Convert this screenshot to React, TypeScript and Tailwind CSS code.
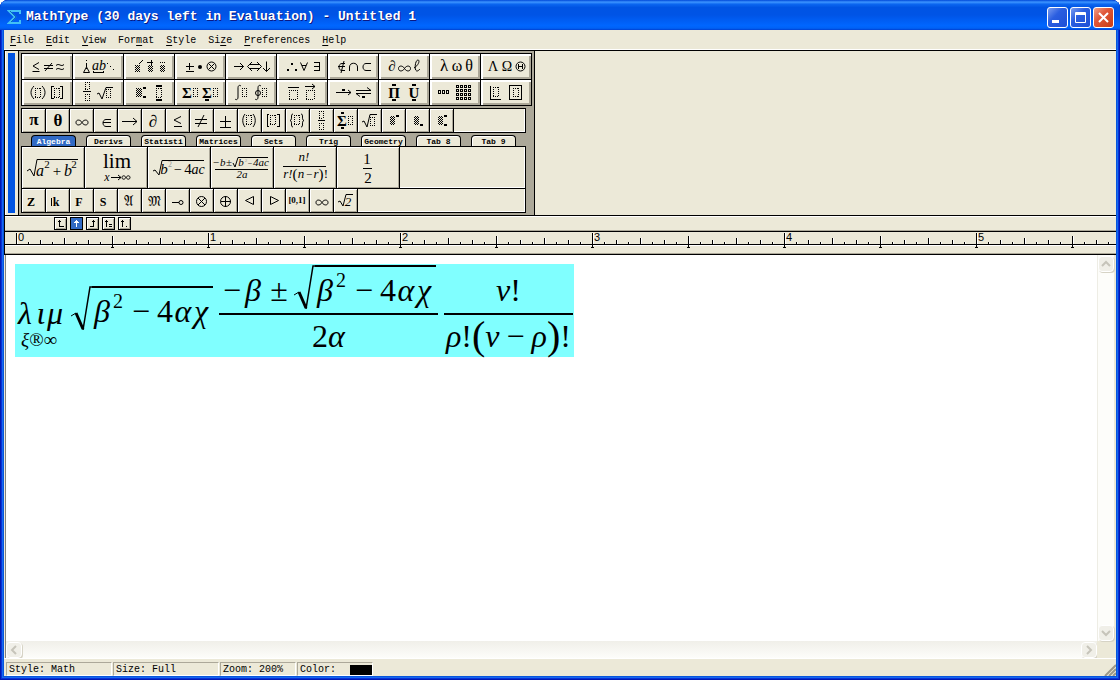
import React from "react";

type IconProps = {
  children: React.ReactNode;
  w: number;
  h: number;
};

type GlyphProps = {
  x: number;
  y: number;
  s?: number;
  b?: boolean;
  i?: boolean;
  fill?: string;
  children: React.ReactNode;
};

type BoxProps = { x: number; y: number; w?: number; h?: number };

const menus = [
  ["", "F", "ile"],
  ["", "E", "dit"],
  ["", "V", "iew"],
  ["For", "m", "at"],
  ["", "S", "tyle"],
  ["Si", "z", "e"],
  ["", "P", "references"],
  ["", "H", "elp"],
];

const tabs = ["Algebra", "Derivs", "Statisti", "Matrices", "Sets", "Trig", "Geometry", "Tab 8", "Tab 9"];

const Icon = ({ children, w, h }: IconProps) => (
  <svg width={w} height={h} viewBox={`0 0 ${w} ${h}`} className="block" aria-hidden="true" fill="none" stroke="none">
    {children}
  </svg>
);

// one symbol, x is its centre and y its baseline
const G = ({ x, y, s = 14, b, i, fill = "#000", children }: GlyphProps) => (
  <text
    x={x}
    y={y}
    fontSize={s}
    textAnchor="middle"
    fill={fill}
    fontFamily="'Liberation Serif', 'DejaVu Serif', 'DejaVu Sans', serif"
    fontWeight={b ? 700 : 400}
    fontStyle={i ? "italic" : "normal"}
  >
    {children}
  </text>
);

const Slot = ({ x, y, w = 5, h = 9 }: BoxProps) => (
  <path
    d={`M${x} ${y}.5h${w}M${x} ${y + h}.5h${w}M${x}.5 ${y}v${h}M${x + w}.5 ${y}v${h + 1}`}
    stroke="#000"
    strokeDasharray="1 1"
    shapeRendering="crispEdges"
  />
);

const Hatch = ({ x, y, w = 5, h = 7 }: BoxProps) => (
  <rect x={x} y={y} width={w} height={h} fill="url(#hatch)" shapeRendering="crispEdges" />
);

const Line = ({ d, t = 1 }: { d: string; t?: number }) => (
  <path d={d} stroke="#000" strokeWidth={t} shapeRendering="crispEdges" />
);

const Curve = ({ d, t = 1 }: { d: string; t?: number }) => <path d={d} stroke="#000" strokeWidth={t} />;

const Bar = ({ x, y, w = 3, h = 2 }: BoxProps) => <rect x={x} y={y} width={w} height={h} fill="#000" />;

const palettes = [
  {
    name: "Relational symbols",
    icon: <><Curve d="M17 8.5l-6 3.5 6 3.5M10.500 17.5h7" /><Curve d="M22 11.5h9M22 14.5h9M30 9l-7 8" /><Curve d="M34 11.5c3-3 5 2 8-1M34 15.5c3-3 5 2 8-1" /></>,
  },
  {
    name: "Spaces and ellipses",
    icon: <><Line d="M13.5 6v1M13.5 9v4M13.5 14v1" /><Curve d="M13.5 13L10.5 18.5h6z" /><G x={26} y={16} s={14} i>ab</G><Line d="M20 16.5v2h10v-2" /><Bar x={34} y={9} w={1} h={1} /><Bar x={37} y={12} w={1} h={1} /><Bar x={40} y={15} w={1} h={1} /></>,
  },
  {
    name: "Embellishments",
    icon: <><Hatch x={11} y={11} /><Curve d="M15 10l4-4" /><Hatch x={24} y={11} /><Line d="M23 8.5h6M27.5 6v5" /><Hatch x={36} y={11} /><Bar x={36} y={8} w={1} h={1} /><Bar x={38} y={8} w={1} h={1} /><Bar x={40} y={8} w={1} h={1} /></>,
  },
  {
    name: "Operator symbols",
    icon: <><Line d="M11 12.5h8M14.5 9v7M11 17.5h8" /><circle cx="25" cy="13" r="2" fill="#000" /><circle cx="36.5" cy="12.5" r="4.5" stroke="#000" /><Curve d="M33.5 9.5l6 6M39.5 9.5l-6 6" /></>,
  },
  {
    name: "Arrow symbols",
    icon: <><Curve d="M8 12.5h9.5M14 9l3.5 3.5L14 16" /><Curve d="M24 10.5h9M24 14.5h9M26 8l-4.5 4.5L26 17M31 8l4.5 4.5L31 17" /><Curve d="M40.5 7.5v10M37 14l3.5 3.5L44 14" /></>,
  },
  {
    name: "Logical symbols",
    icon: <><Bar x={10} y={15} w={2} /><Bar x={14} y={9} w={2} /><Bar x={18} y={15} w={2} /><Curve d="M23.5 8.5l3.5 8 3.5-8M25 11.5h4" /><Line d="M37 8.5h5v8h-5M37 12.5h5" /></>,
  },
  {
    name: "Set theory symbols",
    icon: <><Curve d="M17 9.5h-3c-4 0-4 7 0 7h3M10 12.5h7M16 7l-3 12" /><Curve d="M21.5 17v-4c0-5 8-5 8 0v4" /><Curve d="M43 9.5h-5c-4 0-4 7 0 7h5" /></>,
  },
  {
    name: "Miscellaneous symbols",
    icon: <><G x={13} y={17} s={15}>∂</G><Curve d="M25.5 14.5c-2-3.500-6-3-6 0s4 3.500 6 0 6-3 6 0-4 3.500-6 0" /><Curve d="M35 14c5-3 6-8 4-8-3 0-4 11-1 11 1 0 2-1 3-2" /></>,
  },
  {
    name: "Greek characters (lowercase)",
    icon: <><G x={14} y={17} s={17}>λ</G><G x={27} y={17} s={16}>ω</G><G x={39} y={17} s={16}>θ</G></>,
  },
  {
    name: "Greek characters (uppercase)",
    icon: <><G x={12} y={17} s={14}>Λ</G><G x={26} y={17} s={14}>Ω</G><circle cx="39.5" cy="12.5" r="4.5" stroke="#000" /><Line d="M37.500 10v5M41.500 10v5M37 12.500h5" /></>,
  },
  {
    name: "Fence templates",
    icon: <><Curve d="M12 6c-4 4-4 9 0 13M20 6c4 4 4 9 0 13" /><Slot x={13} y={8} /><Line d="M32 6.5h-2.5v12H32M38 6.5h2.5v12H38" /><Slot x={32} y={8} /></>,
  },
  {
    name: "Fraction and radical templates",
    icon: <><Slot x={12} y={2} w={4} h={7} /><Line d="M10 11.5h8" /><Slot x={12} y={14} w={4} h={6} /><Curve d="M24 14l2-1 3 6 4-11.5h7" /><Slot x={33} y={9} w={4} h={8} /></>,
  },
  {
    name: "Subscript and superscript templates",
    icon: <><Hatch x={12} y={8} w={6} h={9} /><Bar x={19} y={7} /><Bar x={19} y={16} /><Slot x={32} y={8} /><Bar x={32} y={5} w={6} /><Bar x={32} y={19} w={6} /></>,
  },
  {
    name: "Summation templates",
    icon: <><G x={12} y={18} s={15} b>Σ</G><Slot x={18} y={8} w={4} h={8} /><G x={32} y={18} s={15} b>Σ</G><Bar x={30} y={19} w={4} /><Slot x={38} y={8} w={4} h={8} /></>,
  },
  {
    name: "Integral templates",
    icon: <><Curve d="M15 6c-2-1.5-3 0-3 2v9c0 3-2 3-3 2" /><Slot x={16} y={8} w={4} h={8} /><Curve d="M35 6c-2-1.5-3 0-3 2v9c0 3-2 3-3 2" /><circle cx="32" cy="13" r="2.5" stroke="#000" /><Slot x={36} y={8} w={4} h={8} /></>,
  },
  {
    name: "Underbar and overbar templates",
    icon: <><Line d="M11 7.5h11" /><Slot x={12} y={10} w={8} h={9} /><Curve d="M28 6.5h10M35 4l3 2.5-3 2.5" /><Slot x={29} y={10} w={8} h={9} /></>,
  },
  {
    name: "Labeled arrow templates",
    icon: <><Curve d="M8 12.5h15M20 10l3 2.5-3 2.5" /><Bar x={14} y={9} /><Curve d="M28 10.5h15l-4-3M43 13.5H28l4 3" /><Bar x={34} y={16} /></>,
  },
  {
    name: "Products and set theory templates",
    icon: <><G x={15} y={18} s={15} b>Π</G><Bar x={13} y={4} w={4} /><Bar x={13} y={19} w={4} /><G x={35} y={18} s={15} b>U</G><Bar x={33} y={4} w={4} /><Bar x={33} y={19} w={4} /></>,
  },
  {
    name: "Matrix templates",
    icon: (
      <>
        {[8, 12, 16].map((x) => <rect key={x} x={x + 0.5} y="10.5" width="2" height="3" stroke="#000" />)}
        {[0, 1, 2, 3].map((r) => [0, 1, 2, 3].map((c) => (
          <rect key={`${r}-${c}`} x={26.5 + c * 4} y={5.5 + r * 4} width="2" height="2" stroke="#000" />
        )))}
      </>
    ),
  },
  {
    name: "Boxes",
    icon: <><Line d="M9.5 6v13M9 19.5h11" /><Slot x={12} y={7} w={5} h={9} /><Line d="M28.5 5.5h12v14h-12z" /><Slot x={32} y={8} w={5} h={8} /></>,
  },
];

const symbols = [
  { name: "pi", icon: <G x={12} y={16} s={17} b>π</G> },
  { name: "theta", icon: <G x={12} y={17} s={17} b>θ</G> },
  { name: "infinity", icon: <Curve d="M12 13.500c-2-3.500-6-3-6 0s4 3.500 6 0 6-3 6 0-4 3.500-6 0" /> },
  { name: "element of", icon: <Curve d="M17 10.5h-5c-4 0-4 7 0 7h5M9 13.5h8" /> },
  { name: "right arrow", icon: <Curve d="M4 12.5h15M15 9l4 3.5-4 3.5" /> },
  { name: "partial", icon: <G x={11} y={18} s={17} b>∂</G> },
  { name: "less or equal", icon: <Curve d="M15 7.5l-7 3.5 7 3.5M8 17.5h8" /> },
  { name: "not equal", icon: <Curve d="M5 10.5h12M5 14.5h12M14 6L8 18" /> },
  { name: "plus minus", icon: <Line d="M6 12.5h11M11.5 7v11M6 18.5h11" /> },
  { name: "parentheses", icon: <><Curve d="M7 5c-3 4-3 9 0 13M15 5c3 4 3 9 0 13" /><Slot x={8} y={6} /></> },
  { name: "brackets", icon: <><Line d="M7 5.5H5.5v12H7M15 5.5h2.5v12H15" /><Slot x={8} y={6} /></> },
  { name: "braces", icon: <><Curve d="M7 5c-3 0 0 6-3 6.5 3 .5 0 6.5 3 6.5M15 5c3 0 0 6 3 6.5-3 .5 0 6.5-3 6.5" /><Slot x={8} y={6} /></> },
  { name: "fraction", icon: <><Slot x={9} y={2} w={4} h={7} /><Line d="M8 11.5h7" /><Slot x={9} y={14} w={4} h={6} /></> },
  { name: "sum", icon: <><G x={8} y={17} s={15} b>Σ</G><Bar x={7} y={3} /><Bar x={7} y={18} /><Slot x={14} y={7} w={4} h={8} /></> },
  { name: "root", icon: <><Curve d="M4 13l2-1 3 6 3-12.5h7" /><Slot x={12} y={8} w={4} h={8} /></> },
  { name: "superscript", icon: <><Hatch x={8} y={7} w={5} h={9} /><Bar x={14} y={6} /></> },
  { name: "subscript", icon: <><Hatch x={8} y={7} w={5} h={9} /><Bar x={14} y={15} /></> },
  { name: "sub and superscript", icon: <><Hatch x={8} y={7} w={5} h={9} /><Bar x={14} y={6} /><Bar x={14} y={15} /></> },
];

const formulas = [
  {
    name: "root of a squared plus b squared",
    icon: <><Curve d="M5 24l3-2 4 7 3-16.5h41" /><G x={18} y={29} s={16} i>a</G><G x={25} y={21} s={11}>2</G><G x={35} y={29} s={15}>+</G><G x={46} y={29} s={16} i>b</G><G x={52} y={21} s={11}>2</G></>,
  },
  {
    name: "limit",
    icon: <><G x={32} y={21} s={21}>lim</G><G x={22} y={34} s={12} i>x</G><Curve d="M26 30.5h10M33 28l3 2.5-3 2.5" /><Curve d="M41 30.500c-1.500-2.500-4-2-4 0s2.500 2.500 4 0 4-2 4 0-2.500 2.500-4 0" /></>,
  },
  {
    name: "root of discriminant",
    icon: <><Curve d="M5 24l2-1 4 5 3-14.5h42" /><G x={16} y={27} s={15} i>b</G><G x={22} y={20} s={8} fill="#999">2</G><G x={30} y={27}>−</G><G x={40} y={27} s={15}>4</G><G x={50} y={27} s={14} i>ac</G></>,
  },
  {
    name: "quadratic formula",
    icon: <><G x={8} y={19} s={11} i>−b</G><G x={18} y={19} s={11}>±</G><Curve d="M22 16l2 4 3-9.500h30" /><G x={30} y={19} s={11} i>b</G><G x={35} y={15} s={5} fill="#999">2</G><G x={39} y={19} s={8}>−</G><G x={50} y={19} s={11} i>4ac</G><Line d="M4 22.5h53" /><G x={31} y={31} s={11} i>2a</G></>,
  },
  {
    name: "permutations",
    icon: <><G x={30} y={14} s={13} i>n!</G><Line d="M9 19.5h43" /><G x={14} y={31} s={13} i>r!</G><G x={21} y={32} s={15}>(</G><G x={27} y={31} s={13} i>n</G><G x={35} y={31} s={11}>−</G><G x={42} y={31} s={13} i>r</G><G x={47} y={32} s={15}>)</G><G x={52} y={31} s={13}>!</G></>,
  },
  {
    name: "one half",
    icon: <><G x={30} y={17} s={15}>1</G><Line d="M26 21.5h9" /><G x={31} y={36} s={15}>2</G></>,
  },
];

const letters = [
  { name: "integers", icon: <><G x={9} y={17} s={12} b>Z</G><Curve d="M7 16l5-7" /></> },
  { name: "field k", icon: <><G x={10} y={17} s={12} b>k</G><Line d="M5.5 9v8" /></> },
  { name: "field F", icon: <G x={9} y={17} s={12} b>F</G> },
  { name: "sphere", icon: <G x={9} y={17} s={12} b>S</G> },
  { name: "fraktur A", icon: <G x={10} y={17} s={14}>𝔄</G> },
  { name: "fraktur M", icon: <G x={12} y={17} s={14}>𝔐</G> },
  { name: "multimap", icon: <><Curve d="M6 13.5h7" /><circle cx="15" cy="13.5" r="2" stroke="#000" /></> },
  { name: "tensor product", icon: <><circle cx="11.5" cy="12.5" r="5" stroke="#000" /><Curve d="M8 9l7 7M15 9l-7 7" /></> },
  { name: "direct sum", icon: <><circle cx="11.5" cy="12.5" r="5" stroke="#000" /><Line d="M6.5 12.5h10M11.5 7v11" /></> },
  { name: "left triangle", icon: <Curve d="M15.5 7.5v8l-8-4z" /> },
  { name: "right triangle", icon: <Curve d="M8.5 7.5v8l8-4z" /> },
  { name: "unit interval", icon: <G x={11} y={14} s={9} b>[0,1]</G> },
  { name: "infinity sign", icon: <Curve d="M12 13.500c-2-3.500-6-3-6 0s4 3.500 6 0 6-3 6 0-4 3.500-6 0" /> },
  { name: "root two", icon: <><Curve d="M4 13l2-1 3 5 3-11.5h7" /><G x={14} y={17} s={13} i>2</G></> },
];

const tabStops = [
  { name: "Left tab", d: "M3 3.5h3M4.5 2v6h4" },
  { name: "Centre tab", d: "M5.5 2v7M3 4.5h5M4 3.5h3" },
  { name: "Right tab", d: "M5 3.5h3M6.5 2v6h-4" },
  { name: "Relational tab", d: "M2 3.5h3M3.5 2v7M6 6.5h3M6 8.5h3" },
  { name: "Decimal tab", d: "M2 3.5h3M3.5 2v7M7 8.5h1" },
];

const SmallButton = ({ name, children, w, h }: { name: string } & IconProps) => (
  <button
    aria-label={name}
    className="shrink-0 overflow-hidden bg-[#ece9d8] shadow-[inset_1px_1px_#fff,inset_-1px_-1px_#aca899]"
  >
    <Icon w={w} h={h}>{children}</Icon>
  </button>
);

const Rest = () => <div className="flex-1 bg-[#ece9d8] shadow-[inset_-1px_-1px_#fff]" />;

const Ruler = () => {
  const ticks = Array.from({ length: 96 }, (_, n) => n);
  return (
    <svg width="100%" height="22" className="block" shapeRendering="crispEdges" aria-hidden="true">
      <path d="M0 12.5h3000" stroke="#000" />
      <path d="M0 13.5h3000" stroke="#fff" />
      {ticks.map((n) => {
        const x = 11 + n * 12;
        const whole = n % 16 === 0;
        const half = n % 8 === 0;
        const top = whole ? 1 : half ? 4 : n % 4 === 0 ? 6 : n % 2 === 0 ? 8 : 10;
        return (
          <g key={n}>
            <rect x={x} y={top} width="1" height={half && n > 0 ? 15 - top : 12 - top} />
            <rect x={x + 1} y={top} width="1" height={12 - top} fill="#fff" />
            {half && n > 0 && <rect x={x - 1} y="15" width="3" height="1" />}
            {whole && (
              <text x={x + 2} y="9" fontSize="11" fontFamily="'Liberation Sans', sans-serif">
                {n / 16}
              </text>
            )}
          </g>
        );
      })}
    </svg>
  );
};

const ScrollButton = ({ name, d }: { name: string; d: string }) => (
  <button
    aria-label={name}
    className="flex h-4 w-4 shrink-0 items-center justify-center rounded-sm border border-white bg-[#f0efe8] shadow-[1px_1px_#d6d3c5]"
  >
    <svg width="10" height="10" viewBox="0 0 10 10" fill="none" stroke="#c6c4ba" strokeWidth="2">
      <path d={d} />
    </svg>
  </button>
);

const Radical = ({ children }: { children: React.ReactNode }) => (
  <span className="flex">
    <svg width="22" height="46" viewBox="0 0 22 46" fill="none" stroke="#000">
      <path d="M1 30l5-3" />
      <path d="M6 27l7 16" strokeWidth="3" />
      <path d="M13 44L20 1h2" strokeWidth="1.5" />
    </svg>
    <span className="flex border-t-2 border-black pt-[2px] pr-1">{children}</span>
  </span>
);

const Discriminant = () => (
  <Radical>
    <span className="w-5 text-center italic">β</span>
    <sup className="top-0 w-[13px] pl-px text-[20px] leading-[22px]">2</sup>
    <span className="w-8 text-center">−</span>
    <span className="w-4">4</span>
    <span className="w-5 text-center italic">α</span>
    <span className="w-4 text-center italic">χ</span>
  </Radical>
);

const Status = ({ className, children }: { className: string; children: React.ReactNode }) => (
  <div className={`flex h-[14px] items-center border border-t-[#aca899] border-l-[#aca899] border-r-white border-b-white pt-px pl-[2px] ${className}`}>
    {children}
  </div>
);

const App = () => {
  return (
    <div className="flex h-screen min-h-[400px] flex-col overflow-hidden rounded-t-lg bg-[#0855dd] px-1 pb-1 font-['Liberation_Mono',monospace] text-[10px] text-black shadow-[inset_0_0_0_1px_#0019b0,inset_0_0_0_2px_#0831d9,inset_0_0_0_3px_#166aee]">
      <header className="-mx-1 flex h-[30px] shrink-0 items-center bg-[linear-gradient(#0048d8_0%,#3d95ff_7%,#0b66f0_14%,#0054e3_25%,#0054e6_50%,#0066ff_85%,#0062f6_94%,#003fd0_100%)] pt-1 pr-[6px] pl-[7px]">
        <svg width="16" height="16" viewBox="0 0 16 16" fill="none" aria-hidden="true">
          <path d="M13 5V2H2l6 6-6 6h11v-3" stroke="#43c0f5" strokeWidth="2" />
          <path d="M3 2l6 6-5 5" stroke="#0a6fb8" />
        </svg>
        <h1 className="ml-[3px] flex-1 text-[13px] font-bold whitespace-pre text-white [text-shadow:1px_1px_#0a1883]">
          MathType (30 days left in Evaluation) - Untitled 1
        </h1>
        <div className="flex gap-[2px]">
          <button aria-label="Minimize" className="size-[21px] rounded-[3px] border border-white bg-[linear-gradient(135deg,#7a9cf0,#2a5ee0_40%,#1e4fd6)]">
            <svg width="19" height="19"><rect x="4" y="12" width="7" height="3" fill="#fff" /></svg>
          </button>
          <button aria-label="Maximize" className="size-[21px] rounded-[3px] border border-white bg-[linear-gradient(135deg,#7a9cf0,#2a5ee0_40%,#1e4fd6)]">
            <svg width="19" height="19" fill="none" stroke="#fff"><path d="M4.5 4.5h10v10h-10zM4 5.5h11M4 6.5h11" /></svg>
          </button>
          <button aria-label="Close" className="size-[21px] rounded-[3px] border border-white bg-[linear-gradient(135deg,#f0a088,#e0583a_40%,#c83c14)]">
            <svg width="19" height="19" stroke="#fff" strokeWidth="2"><path d="M5 5l9 9M14 5l-9 9" /></svg>
          </button>
        </div>
      </header>

      <nav className="flex h-[21px] shrink-0 items-center gap-3 border-b border-black bg-[#ece9d8] pt-[2px] pl-[6px] shadow-[inset_0_-1px_#fff]">
        {menus.map(([before, key, after]) => (
          <button key={before + key + after} className="leading-3">
            {before}<span className="underline underline-offset-2">{key}</span>{after}
          </button>
        ))}
      </nav>

      <svg width="0" height="0" className="absolute" aria-hidden="true">
        <defs>
          <pattern id="hatch" width="2" height="2" patternUnits="userSpaceOnUse">
            <rect width="1" height="1" fill="#000" />
            <rect x="1" y="1" width="1" height="1" fill="#000" />
          </pattern>
        </defs>
      </svg>

      <section className="flex shrink-0 border-b border-l border-black bg-[#ece9d8]">
        <div className="w-[13px] border-l border-white py-[2px] pr-[3px] pl-[2px]">
          <div className="h-full bg-[#0054e3]" />
        </div>
        <div className="border-x border-black bg-[#aca899] p-[2px]">
          <div className="grid grid-cols-10 gap-px border border-black bg-black">
            {palettes.map((p) => (
              <button
                key={p.name}
                aria-label={p.name}
                className="h-[25px] w-[50px] overflow-hidden bg-[#ece9d8] shadow-[inset_2px_2px_#fff,inset_-2px_-2px_#aca899]"
              >
                <Icon w={50} h={25}>{p.icon}</Icon>
              </button>
            ))}
          </div>

          <div className="mt-[2px] mr-[6px] flex gap-px border border-black bg-black">
            {symbols.map((s) => (
              <SmallButton key={s.name} name={s.name} w={23} h={23}>{s.icon}</SmallButton>
            ))}
            <Rest />
          </div>

          <div className="mt-[2px] flex gap-[10px] pl-[10px]" role="tablist">
            {tabs.map((tab, i) => (
              <button
                key={tab}
                role="tab"
                aria-selected={i === 0}
                className={`flex h-[11px] w-[45px] justify-center overflow-hidden rounded-t-[4px] border border-b-0 border-black text-[8px] leading-[12px] font-bold whitespace-pre ${i === 0 ? "bg-[#316ac5] text-white" : "bg-[#ece9d8] shadow-[inset_1px_1px_#fff]"}`}
              >
                {tab}
              </button>
            ))}
          </div>

          <div className="mr-[6px] flex gap-px border border-black bg-black">
            {formulas.map((f) => (
              <SmallButton key={f.name} name={f.name} w={62} h={41}>{f.icon}</SmallButton>
            ))}
            <Rest />
          </div>
          <div className="mr-[6px] flex gap-px border border-t-0 border-black bg-black">
            {letters.map((l) => (
              <SmallButton key={l.name} name={l.name} w={23} h={23}>{l.icon}</SmallButton>
            ))}
            <Rest />
          </div>
        </div>
      </section>

      <div className="flex h-4 shrink-0 items-center gap-[3px] border-b border-l border-black bg-[#ece9d8] pl-[49px] shadow-[inset_0_1px_#fff,inset_0_-1px_#aca899]">
        {tabStops.map((t, i) => (
          <button
            key={t.name}
            aria-label={t.name}
            className={`size-[13px] border border-black ${i === 1 ? "bg-[#316ac5] text-white" : "bg-[#ece9d8] shadow-[inset_1px_1px_#fff,inset_-1px_-1px_#aca899]"}`}
          >
            <svg width="11" height="11" fill="none" stroke="currentColor" shapeRendering="crispEdges" className="block"><path d={t.d} /></svg>
          </button>
        ))}
      </div>

      <div className="h-[23px] shrink-0 overflow-hidden border-b border-l border-black bg-[#ece9d8] shadow-[inset_0_-1px_#aca899]">
        <Ruler />
      </div>

      <main className="flex min-h-0 flex-1 border-l border-[#ece9d8] bg-white">
        <div className="flex min-w-0 flex-1 flex-col border-l border-[#808080]">
          <div className="flex-1 overflow-hidden pt-[9px] pl-[9px]">
            <div className="flex h-[93px] w-fit items-start bg-[#80ffff] pr-px font-['Liberation_Serif',serif] text-[32px] leading-[42px]">
              <span className="flex w-[55px] flex-col pt-7">
                <span className="flex italic">
                  <span className="w-5 text-center">λ</span>
                  <span className="w-3 text-center">ι</span>
                  <span className="w-4">μ</span>
                </span>
                <span className="-mt-2 pl-[6px] text-[19px] leading-[28px]"><i>ξ</i>®∞</span>
              </span>
              <span className="pt-[22px]"><Discriminant /></span>
              <span className="ml-[6px] flex flex-col items-center">
                <span className="flex h-[49px] items-start pt-px pr-[2px] pl-1">
                  <span className="w-[18px] pt-1">−</span>
                  <span className="w-6 pt-1 text-center italic">β</span>
                  <span className="w-7 pt-1 text-center">±</span>
                  <Discriminant />
                </span>
                <span className="h-[2px] self-stretch bg-black" />
                <span>2<i>α</i></span>
              </span>
              <span className="ml-[6px] flex flex-col items-center">
                <span className="h-[49px] pt-[5px]"><i>ν</i>!</span>
                <span className="h-[2px] self-stretch bg-black" />
                <span className="flex px-[2px]">
                  <i>ρ</i>!<span className="text-[40px]">(</span><i>ν</i>
                  <span className="w-8 text-center">−</span>
                  <i>ρ</i><span className="text-[40px]">)</span>!
                </span>
              </span>
            </div>
          </div>
          <div className="flex h-[17px] items-center justify-between bg-[linear-gradient(#f0efe9,#fdfdfa)]">
            <ScrollButton name="Scroll left" d="M7 1L3 5l4 4" />
            <ScrollButton name="Scroll right" d="M3 1l4 4-4 4" />
          </div>
        </div>
        <div className="flex w-[19px] flex-col bg-[#ece9d8] pr-[2px] pb-[17px]">
          <div className="flex flex-1 flex-col items-center justify-between border-l border-[#eeede5] bg-[#fdfdfa] pt-px">
            <ScrollButton name="Scroll up" d="M1 7l4-4 4 4" />
            <ScrollButton name="Scroll down" d="M1 3l4 4 4-4" />
          </div>
        </div>
      </main>

      <footer className="flex h-[18px] shrink-0 items-end gap-px border-t border-white bg-[#ece9d8] pl-[2px] leading-3">
        <Status className="w-[106px]">Style: Math</Status>
        <Status className="w-[106px]">Size: Full</Status>
        <Status className="w-[76px]">Zoom: 200%</Status>
        <Status className="w-[76px] justify-between">
          Color: <span className="h-[10px] w-[22px] bg-black" />
        </Status>
        <svg width="12" height="12" className="ml-auto" stroke="#9c9888" aria-hidden="true">
          <path d="M1 12L12 1M5 12l7-7M9 12l3-3" strokeWidth="2" />
        </svg>
      </footer>
    </div>
  );
};

export default App;
